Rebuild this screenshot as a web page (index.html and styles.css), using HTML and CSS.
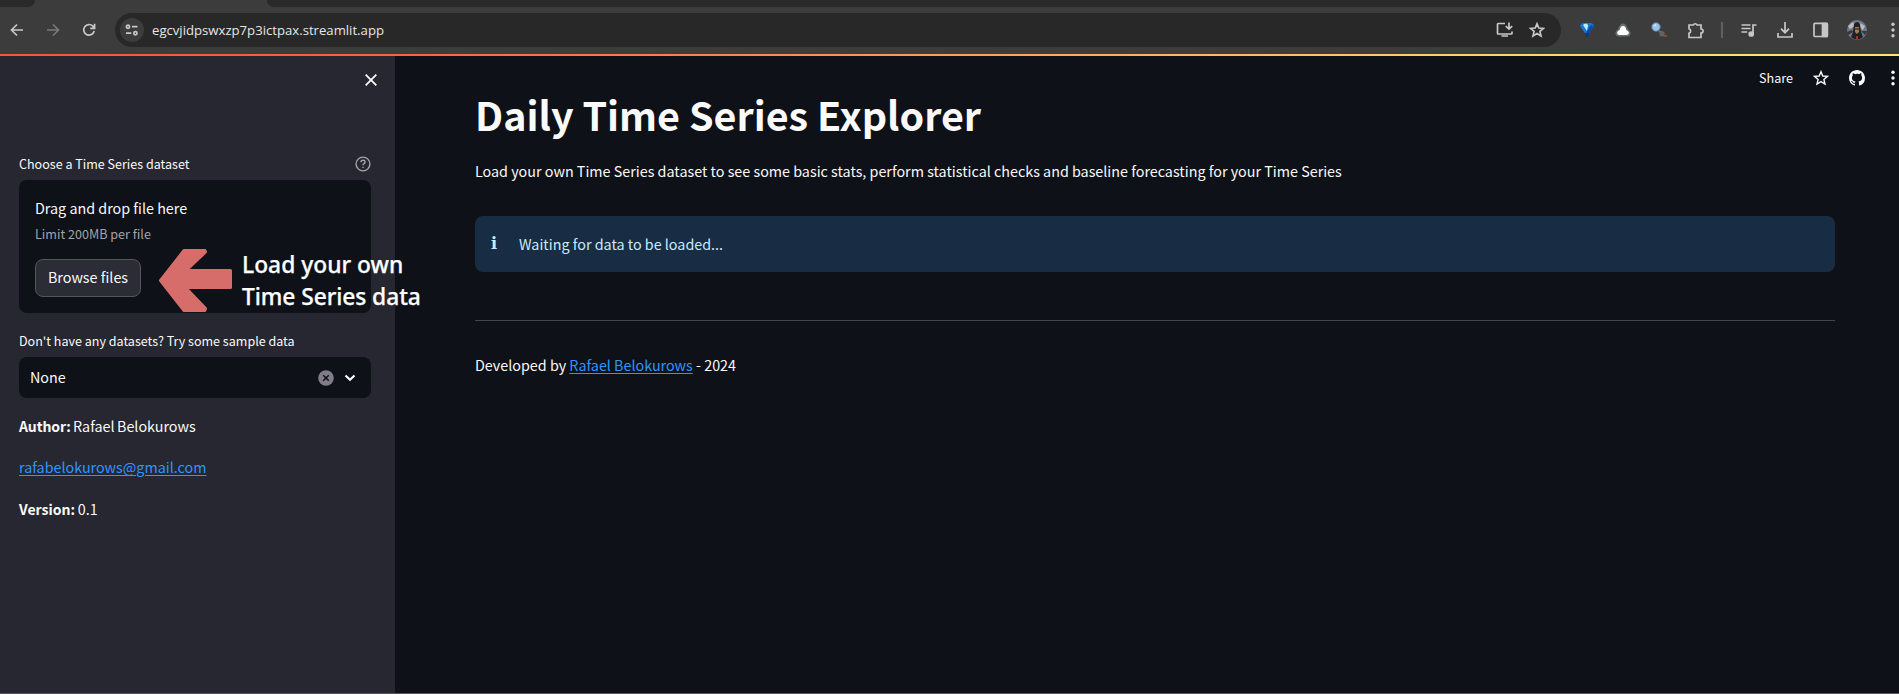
FILE: index.html
```html
<!DOCTYPE html>
<html lang="en">
<head>
<meta charset="utf-8">
<title>Daily Time Series Explorer</title>
<link rel="stylesheet" href="styles.css">
</head>
<body>
<div class="tabstrip"><div class="tab-prev"></div><div class="tab-active"></div><div class="tab-rest"></div></div>
<header class="toolbar">
  <nav class="nav">
    <svg width="14" height="14" viewBox="0 0 14 14" class="ln"><path d="M13 7H2M7 1.5L1.5 7L7 12.5"/></svg>
    <svg width="14" height="14" viewBox="0 0 14 14" class="ln dim"><path d="M1 7H12M7 1.5L12.5 7L7 12.5"/></svg>
    <svg width="14" height="14" viewBox="0 0 14 14" class="ln"><path d="M12.2 8A5.3 5.3 0 1 1 10.9 3.2L12.6 5M12.6 .8V5.3H8.2"/></svg>
  </nav>
  <div class="omnibox">
    <span class="site"><svg width="14" height="12" viewBox="0 0 14 12" class="ln"><circle cx="3" cy="2.7" r="1.6"/><path d="M7 2.7H12.5M1 9.2H6.3"/><circle cx="10.4" cy="9.2" r="1.6"/></svg></span>
    <span class="url">egcvjidpswxzp7p3ictpax.streamlit.app</span>
    <svg class="ln install" width="18" height="16" viewBox="0 0 18 16"><path d="M9 1.5H2.2Q1.5 1.5 1.5 2.2V11.3Q1.5 12 2.2 12H15.3Q16 12 16 11.3V9.5M5.5 14H12M13 .5V7M9.8 4.2L13 7.2L16.2 4.2"/></svg>
    <svg class="ln" width="16" height="16" viewBox="0 0 16 16"><path d="M8 1.8L9.8 6L14.4 6.4L10.9 9.4L12 13.9L8 11.5L4 13.9L5.1 9.4L1.6 6.4L6.2 6Z"/></svg>
  </div>
  <div class="exts">
    <svg width="14" height="16" viewBox="0 0 14 16"><path d="M0 4Q1 1 3.5 1H10.5Q13 1 14 4L9 11H5Z" fill="#1877d8"/><path d="M3 3Q6 0 8 3L7 9Z" fill="#b8f0ff"/><path d="M7 9L11 3L13.5 4L9 11H6Z" fill="#0649a8"/><path d="M5 11H9V14L7 15L5 14Z" fill="#073b83"/></svg>
    <svg width="16" height="14" viewBox="0 0 16 14"><path d="M3 13.5H13Q16 12.5 15.6 9.8Q14.5 7 12.8 6Q11.4 .4 8 .4Q4.6 .4 3.2 6Q1.5 7 .4 9.8Q0 12.5 3 13.5Z" fill="#696d71"/><path d="M4 12H12Q14.3 11.4 13.8 9.2Q13 7.2 11.2 7Q10.8 3 8 3Q5.2 3 4.8 7Q3 7.2 2.2 9.2Q1.7 11.4 4 12Z" fill="#fff"/></svg>
    <svg width="16" height="16" viewBox="0 0 16 16"><circle cx="5" cy="5" r="4.2" fill="#9fc5e2" stroke="#5583ac"/><path d="M3 4L5 2.5" stroke="#def" stroke-width="1.2"/><path d="M8 9L11 11" stroke="#777" stroke-width="2"/><circle cx="11" cy="11.7" r="2.7" fill="#606267"/><path d="M12.5 14H16" stroke="#96552f" stroke-width="1.6"/></svg>
    <svg class="ln" width="18" height="17" viewBox="0 0 18 17"><path d="M2 3H6.3A2 2 0 0 1 10 3H14V7A2 2 0 0 1 14 11V15.5H2V11.2A2.3 2.3 0 0 0 2 6.8Z"/></svg>
    <i class="rule"></i>
    <svg class="ln" width="16" height="15" viewBox="0 0 16 15"><path d="M.5 2H9.5M.5 5.5H9.5M.5 9H6.2M12 11V2H15.5"/><circle cx="10.2" cy="11" r="2" fill="#c7c7c7"/></svg>
    <svg class="ln" width="16" height="16" viewBox="0 0 16 16"><path d="M8 0V10.5M4 6.7L8 10.7L12 6.7M1 11V15H15V11"/></svg>
    <svg class="ln" width="16" height="16" viewBox="0 0 16 16"><rect x="1" y="1.3" width="13.4" height="13.2" rx="1"/><path d="M9.5 1.5H14V14.5H9.5Z" fill="#c7c7c7"/></svg>
    <svg width="20" height="20" viewBox="0 0 20 20"><circle cx="10" cy="10" r="10" fill="#737982"/><path d="M1 6L6 2L8 6L3 9ZM13 3L18 6L16 10L12 7Z" fill="#b7bdc4"/><path d="M7 4Q10 0 13 4L14 12L16 17Q10 22 4 17L6 12Z" fill="#202127"/><path d="M0 12L5 10L6 12L1 15ZM14 11L20 11L18 15Z" fill="#34373e"/><path d="M8 7H12V12L10 14L8 12Z" fill="#aa7c4d"/><path d="M8 9H12" stroke="#26252b" stroke-width="1.2"/><path d="M9 16H11V20H9Z" fill="#b42531"/></svg>
    <svg width="4" height="16" viewBox="0 0 4 16" fill="#c7c7c7"><circle cx="2" cy="2.3" r="1.7"/><circle cx="2" cy="8" r="1.7"/><circle cx="2" cy="13.7" r="1.7"/></svg>
  </div>
</header>
<div class="decoration"></div>
<div class="app">
  <aside class="sidebar">
    <div class="close"><svg width="14" height="14" viewBox="0 0 14 14"><path d="M1.7 1.7L12.3 12.3M12.3 1.7L1.7 12.3" stroke="#fafafa" stroke-width="1.8"/></svg></div>
    <div class="label"><span>Choose a Time Series dataset</span>
      <svg width="16" height="16" viewBox="0 0 16 16" fill="none" stroke="#a5a5aa" stroke-width="1.4"><circle cx="8" cy="8" r="6.9"/><path d="M5.9 6.3Q6 4.3 8 4.3Q10.1 4.3 10.1 6.1Q10.1 7 9 7.7Q8 8.3 8 9.3M8 10.7V12"/></svg></div>
    <div class="drop">
      <div class="drag"><span>Drag and drop file here</span></div>
      <div class="limit"><span>Limit 200MB per file</span></div>
      <button class="browse">Browse files</button>
    </div>
    <div class="label second"><span>Don't have any datasets? Try some sample data</span></div>
    <div class="select"><span>None</span>
      <svg width="16" height="16" viewBox="0 0 16 16"><circle cx="8" cy="8" r="7.8" fill="#807d88"/><path d="M5.2 5.2L10.8 10.8M10.8 5.2L5.2 10.8" stroke="#0e1117" stroke-width="1.5"/></svg>
      <svg class="chev" width="12" height="8" viewBox="0 0 12 8"><path d="M1.5 1.5L6 5.8L10.5 1.5" fill="none" stroke="#fafafa" stroke-width="2.2"/></svg>
    </div>
    <p class="author"><b>Author:</b> Rafael Belokurows</p>
    <p class="mail"><a href="#">rafabelokurows@gmail.com</a></p>
    <p class="version"><b>Version:</b> 0.1</p>
    <div class="callout">
      <svg width="73" height="63" viewBox="0 0 73 63"><path d="M25 1.5H46L46.5 3L27 21.5H71.5V38.5H26.5L46.5 59.5L46 61.5H25L1.5 31.5Z" fill="#d76d6a" stroke="#d76d6a" stroke-width="3" stroke-linejoin="round"/></svg>
      <div class="callout-text"><div>Load your own</div><div>Time Series data</div></div>
    </div>
  </aside>
  <main class="main">
    <div class="actions"><span>Share</span>
      <svg width="16" height="16" viewBox="0 0 16 16" fill="none" stroke="#fafafa" stroke-width="1.4"><path d="M8 1.7L9.8 6L14.5 6.4L10.9 9.4L12 14.1L8 11.6L4 14.1L5.1 9.4L1.5 6.4L6.2 6Z"/></svg>
      <svg width="16" height="16" viewBox="0 0 16 16" fill="#fafafa"><path d="M8 0C3.58 0 0 3.58 0 8c0 3.54 2.29 6.53 5.47 7.59.4.07.55-.17.55-.38 0-.19-.01-.82-.01-1.49-2.01.37-2.53-.49-2.69-.94-.09-.23-.48-.94-.82-1.13-.28-.15-.68-.52-.01-.53.63-.01 1.08.58 1.23.82.72 1.21 1.87.87 2.33.66.07-.52.28-.87.51-1.07-1.78-.2-3.64-.89-3.64-3.95 0-.87.31-1.59.82-2.15-.08-.2-.36-1.02.08-2.12 0 0 .67-.21 2.2.82A7.6 7.6 0 0 1 8 3.87c.68 0 1.36.09 2 .27 1.53-1.04 2.2-.82 2.2-.82.44 1.1.16 1.92.08 2.12.51.56.82 1.27.82 2.15 0 3.07-1.87 3.75-3.65 3.95.29.25.54.73.54 1.48 0 1.07-.01 1.93-.01 2.2 0 .21.15.46.55.38A8 8 0 0 0 16 8C16 3.58 12.42 0 8 0Z"/></svg>
      <svg width="4" height="16" viewBox="0 0 4 16" fill="#fafafa"><circle cx="2" cy="2.3" r="1.7"/><circle cx="2" cy="8" r="1.7"/><circle cx="2" cy="13.7" r="1.7"/></svg>
    </div>
    <h1>Daily Time Series Explorer</h1>
    <p class="desc">Load your own Time Series dataset to see some basic stats, perform statistical checks and baseline forecasting for your Time Series</p>
    <div class="alert"><span class="info">i</span><span>Waiting for data to be loaded...</span></div>
    <hr>
    <p class="dev">Developed by <a href="#">Rafael Belokurows</a> - 2024</p>
  </main>
</div>
<div class="edge"></div>
</body>
</html>
```
FILE: styles.css
```css
* { box-sizing: border-box; }
body { margin: 0; width: 1899px; height: 694px; overflow: hidden; background: #0e1117; color: #fafafa; font: 14.34px/24px "Noto Sans CJK SC", "Source Sans Pro", sans-serif; display: flex; flex-direction: column; }
p, h1 { margin: 0; white-space: nowrap; }
svg { display: block; flex: none; }
a { color: #2f95ff; text-decoration: underline; text-underline-offset: 2px; text-decoration-thickness: 1px; }
.ln { fill: none; stroke: #c7c7c7; stroke-width: 1.7; }
.dim { stroke: #77797c; }
.tabstrip { height: 7px; flex: none; display: flex; background: #3c3c3c; }
.tab-prev { width: 35px; background: #292929; border-bottom-right-radius: 8px; }
.tab-active { width: 232px; }
.tab-rest { flex: 1; background: #292929; border-bottom-left-radius: 8px; }
.toolbar { height: 47px; flex: none; background: #3c3c3c; display: flex; align-items: flex-start; padding: 6px 0 0 10px; }
.nav { height: 34px; width: 105px; flex: none; display: flex; align-items: center; gap: 22px; }
.omnibox { width: 1446px; flex: none; height: 34px; border-radius: 17px; background: #282828; display: flex; align-items: center; padding: 0 16px 0 5px; }
.site { width: 24px; height: 24px; border-radius: 50%; background: #3c3c3c; display: flex; align-items: center; justify-content: center; }
.url { margin-left: 8px; font: 13.15px/20px "Open Sans", "Noto Sans", sans-serif; color: #e6e6e6; flex: 1; }
.install { margin-right: 15px; }
.exts { height: 34px; flex: none; display: flex; align-items: center; margin-left: 19px; }
.exts > * { margin-right: 20px; }
.exts > :nth-child(1) { margin-right: 21px; }
.exts > :nth-child(4) { margin-right: 16px; }
.exts > :nth-child(8) { margin-right: 18px; }
.exts > :nth-child(9) { margin-right: 24px; }
.exts > :nth-child(10) { margin-right: 0; }
.exts > .rule { width: 2px; height: 16px; background: #606163; margin-right: 18px; }
.decoration { height: 2px; flex: none; background: linear-gradient(90deg, #ff5246, #ff5f49 21%, #ff9d62 50%, #ffd86c 80%, #ffe575); }
.app { height: 637px; display: flex; }
.sidebar { position: relative; width: 395px; background: #262730; padding: 0 24px 0 19px; flex: none; }
.close { height: 96px; padding-top: 17px; display: flex; justify-content: flex-end; margin-right: -7px; }
.label { height: 24px; font-size: 12.54px; line-height: 24px; display: flex; justify-content: space-between; align-items: center; white-space: nowrap; }
.drop { margin-top: 4px; height: 133px; border-radius: 8px; background: #0e1117; padding: 16px; }
.drag { height: 24px; }
.limit { height: 24px; margin-top: 2px; font-size: 12.6px; color: #a3a3a8; }
.browse { display: block; margin-top: 13px; width: 106px; height: 38px; padding: 0 0 2px; border: 1px solid #55565d; border-radius: 8px; background: #2b2c36; color: #fafafa; font: 14.34px/34px "Noto Sans CJK SC", sans-serif; }
.second { margin-top: 16px; }
.select { margin-top: 4px; height: 41px; border-radius: 8px; background: #0e1117; display: flex; align-items: center; padding: 0 15px 0 11px; }
.select span { flex: 1; padding-bottom: 2px; }
.chev { margin-left: 10px; }
b { font-size: 14px; }
.author { margin-top: 16px; word-spacing: -.8px; }
.author b { letter-spacing: -.1px; }
.mail { margin-top: 17px; }
.version { margin-top: 18px; word-spacing: -.5px; }
.callout { position: absolute; left: 159px; top: 193px; display: flex; }
.callout-text { font: 500 22.8px/32px "Noto Sans", sans-serif; margin-left: 10px; color: #fff; white-space: nowrap; -webkit-text-stroke: .25px #fff; }
.callout-text div:last-child { letter-spacing: -.08px; }
.main { flex: 1; padding: 0 64px 0 80px; }
.actions { height: 45px; margin-right: -60px; display: flex; justify-content: flex-end; align-items: center; font-size: 12.6px; gap: 20px; }
.actions > * { margin-bottom: 2px; }
.actions svg:last-child { margin-left: 6px; }
h1 { height: 53px; margin-top: -14px; font-size: 39.45px; line-height: 53px; font-weight: 700; }
.desc { margin-top: 19px; }
.alert { margin-top: 33px; height: 56px; border-radius: 8px; background: #182d43; color: #c7ebff; padding: 16px; display: flex; }
.info { width: 28px; font: bold 16px/24px "DejaVu Serif", serif; }
hr { margin: 48px 0 32px; border: 0; height: 1px; background: #454547; }
.edge { height: 1px; background: #5b545e; }
```
